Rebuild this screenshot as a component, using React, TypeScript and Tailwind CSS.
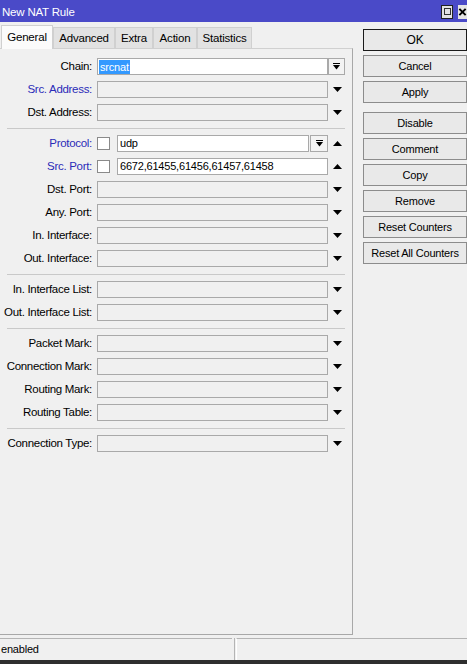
import React from "react";

type Row = {
  label: string;
  blue?: boolean;
  value?: string;
  selected?: boolean;
  combo?: boolean;
  check?: boolean;
  arrow?: "down" | "up" | "none";
};

const groups: Row[][] = [
  [
    { label: "Chain:", value: "srcnat", selected: true, combo: true, arrow: "none" },
    { label: "Src. Address:", blue: true },
    { label: "Dst. Address:" },
  ],
  [
    { label: "Protocol:", blue: true, check: true, value: "udp", combo: true, arrow: "up" },
    { label: "Src. Port:", blue: true, check: true, value: "6672,61455,61456,61457,61458", arrow: "up" },
    { label: "Dst. Port:" },
    { label: "Any. Port:" },
    { label: "In. Interface:" },
    { label: "Out. Interface:" },
  ],
  [{ label: "In. Interface List:" }, { label: "Out. Interface List:" }],
  [
    { label: "Packet Mark:" },
    { label: "Connection Mark:" },
    { label: "Routing Mark:" },
    { label: "Routing Table:" },
  ],
  [{ label: "Connection Type:" }],
];

const buttons = [
  ["OK", "Cancel", "Apply"],
  ["Disable", "Comment", "Copy", "Remove", "Reset Counters", "Reset All Counters"],
];

function Tri({ dir }: { dir: "down" | "up" }) {
  return (
    <svg width="9" height="5" viewBox="0 0 9 5">
      {dir === "down" ? (
        <polygon points="0,0 9,0 4.5,5" fill="#000" />
      ) : (
        <polygon points="0,5 9,5 4.5,0" fill="#000" />
      )}
    </svg>
  );
}

function ComboButton({ w }: { w: string }) {
  return (
    <div className={`${w} h-[17px] border border-[#a9a9a9] bg-[#f3f3f3] flex items-center justify-center`}>
      <svg width="7" height="7" viewBox="0 0 7 7">
        <rect x="0" y="0" width="7" height="1" fill="#000" />
        <polygon points="0,2 7,2 3.5,6.5" fill="#000" />
      </svg>
    </div>
  );
}

function FormRow({ r }: { r: Row }) {
  const active = r.value !== undefined;
  const arrow = r.arrow ?? "down";
  return (
    <div className="flex items-center h-[17px] mb-[6px]">
      <div
        className={`w-[93px] text-right pr-[1px] whitespace-nowrap text-[11.5px] tracking-[-0.3px] ${
          r.blue ? "text-[#2b2bb8]" : "text-black"
        }`}
      >
        {r.label}
      </div>
      <div className="ml-[4px] flex items-center">
        {r.check && (
          <div className="w-[13px] h-[13px] border border-[#8a8a8a] bg-white mr-[7px]" />
        )}
        <div
          className={`h-[17px] border border-[#a9a9a9] flex items-center pl-[1px] ${
            active ? "bg-white" : "bg-[#f0f0f0]"
          } ${r.check ? (r.combo ? "w-[192px]" : "w-[211px]") : "w-[231px]"}`}
        >
          {r.selected ? (
            <span className="bg-[#3399ff] text-white px-[1px] leading-[14px]">{r.value}</span>
          ) : (
            <span className="px-[1px]">{r.value}</span>
          )}
        </div>
        {r.combo && r.check && (
          <div className="ml-[1px]">
            <ComboButton w="w-[18px]" />
          </div>
        )}
        {r.combo && !r.check ? (
          <ComboButton w="w-[17px]" />
        ) : (
          <div className="w-[18px] h-[17px] flex items-center justify-center">
            {arrow !== "none" && <Tri dir={arrow} />}
          </div>
        )}
      </div>
    </div>
  );
}

const tabs = [
  { name: "General", w: "w-[52px]" },
  { name: "Advanced", w: "w-[62px]" },
  { name: "Extra", w: "w-[38px]" },
  { name: "Action", w: "w-[44px]" },
  { name: "Statistics", w: "w-[55px]" },
];

export default function App() {
  return (
    <div className="w-[467px] h-[664px] bg-[#f0f0f0] overflow-hidden flex flex-col font-['Liberation_Sans',Arial,sans-serif] text-[11px] tracking-[-0.2px] text-black">
      {/* title bar */}
      <div className="h-[22px] bg-[#4a4ac8] flex items-center pl-[2px] shrink-0">
        <span className="text-white text-[11.5px] leading-none pt-[3px]">New NAT Rule</span>
        <div className="ml-auto flex items-center gap-[5px] pt-[1px]">
          <div className="w-[12px] h-[14px] bg-[#e4e4e4] border border-[#222] flex items-center justify-center">
            <div className="w-[7px] h-[7px] border border-[#333]" />
          </div>
          <div className="w-[9px] h-[14px] bg-[#e4e4e4] flex items-center justify-start overflow-hidden">
            <svg width="10" height="10" viewBox="0 0 10 10">
              <path d="M1.5 1.5 L8.5 8.5 M8.5 1.5 L1.5 8.5" stroke="#000" strokeWidth="2.2" />
            </svg>
          </div>
        </div>
      </div>

      {/* body */}
      <div className="flex h-[614px] shrink-0">
        <div className="w-[353px] flex flex-col">
          <div className="h-[26px] flex items-end pl-[1px]">
            {tabs.map((t, i) =>
              i === 0 ? (
                <div
                  key={t.name}
                  className={`${t.w} h-[24px] bg-[#fbfbfb] border-t border-l border-r border-[#d0d0d0] flex items-center justify-center pt-[1px] relative top-[1px] z-10 text-[11.5px]`}
                >
                  {t.name}
                </div>
              ) : (
                <div
                  key={t.name}
                  className={`${t.w} h-[21px] bg-[#e2e2e2] border-t border-l border-r border-[#d0d0d0] flex items-center justify-center pt-[1px] text-[11.5px]`}
                >
                  {t.name}
                </div>
              )
            )}
          </div>
          <div className="flex-1 flex flex-col border-t border-r border-b border-t-[#d0d0d0] border-r-[#a8a8a8] border-b-[#a8a8a8] pt-[9px] mb-[1px]">
            {groups.map((g, gi) => (
              <div key={gi} className="flex flex-col">
                {gi > 0 && <div className="ml-[7px] w-[338px] h-px bg-[#c9c9c9] mt-[1px] mb-[6px]" />}
                {g.map((r) => (
                  <FormRow key={r.label} r={r} />
                ))}
              </div>
            ))}
          </div>
        </div>

        <div className="ml-[10px] w-[104px] pt-[7px] flex flex-col">
          {buttons.map((grp, gi) => (
            <div key={gi} className={`flex flex-col gap-[4px] ${gi > 0 ? "mt-[9px]" : ""}`}>
              {grp.map((b) => (
                <div
                  key={b}
                  className={`h-[22px] flex items-center justify-center bg-[#e9e9e9] border ${
                    b === "OK" ? "border-[#1a1a1a] text-[12px]" : "border-[#8c8c8c]"
                  }`}
                >
                  {b}
                </div>
              ))}
            </div>
          ))}
        </div>
      </div>

      {/* status bar */}
      <div className="mt-[2px] h-[22px] flex shrink-0">
        <div className="w-[232px] border-t border-[#b4b4b4] flex items-center pl-[1px]">enabled</div>
        <div className="w-[3px] border-r border-[#b4b4b4]" />
        <div className="flex-1 border-t border-l border-l-white border-t-[#b4b4b4] ml-[1px]" />
      </div>
      <div className="flex-1 bg-[#2e2e2e]" />
    </div>
  );
}
